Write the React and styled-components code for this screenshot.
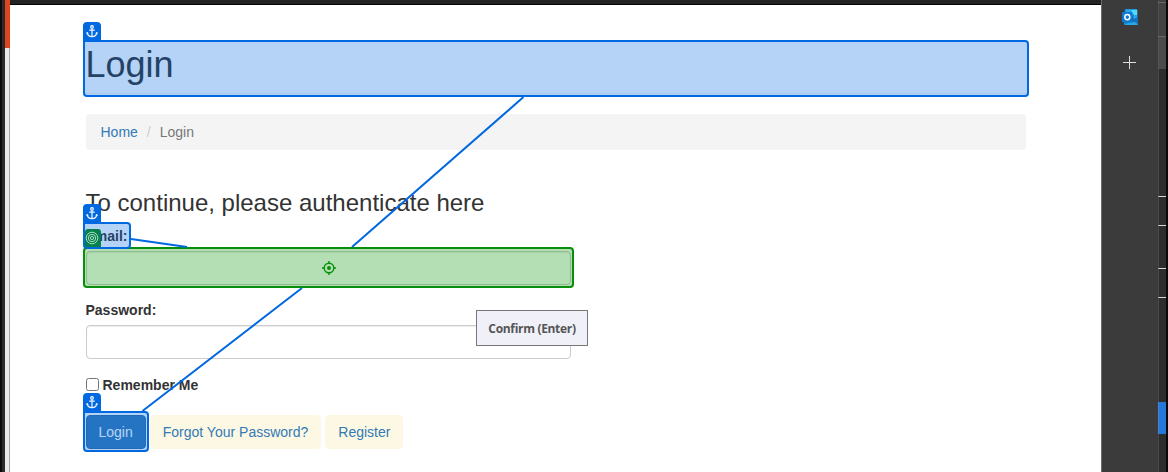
import React from "react";
import styled, { createGlobalStyle } from "styled-components";

const BLUE = "#0068e0";
const GREEN = "#078f0b";

const GlobalStyle = createGlobalStyle`
  * { box-sizing: border-box; }
  body {
    margin: 0;
    overflow: hidden;
    background: #fff;
    color: #333;
    font: 14px/20px "Liberation Sans", Arial, sans-serif;
  }
`;

const Screen = styled.div`
  position: relative;
  display: flex;
  width: 1168px;
  height: 472px;
  overflow: hidden;
`;

const WindowEdge = styled.div`
  flex: none;
  width: 5px;
  background: #2b2b2b;
  border-left: 2px solid #0b0b0b;
`;

const Gutter = styled.div`
  flex: none;
  width: 5px;
  background: #ebe9e8;
  border-right: 1px solid #a6a6a6;
`;

const GutterAccent = styled.div`
  width: 5px;
  height: 48px;
  background: #df4420;
`;

const Page = styled.main`
  flex: none;
  width: 1091px;
  border-top: 4px solid #232323;
  background: #fff;
`;

const TopShade = styled.div`
  height: 1px;
  background: #050505;
`;

const Content = styled.div`
  width: 940px;
  margin-left: 75.5px;
  padding-top: 39px;
`;

const PageHeader = styled.header`
  position: relative;
  height: 50px;
  margin-bottom: 20px;
  border-bottom: 1px solid #eee;
`;

const Title = styled.h1`
  margin: 0;
  font-size: 36px;
  font-weight: 400;
  line-height: 41px;
`;

const Breadcrumb = styled.nav`
  display: flex;
  height: 36px;
  padding: 8px 15px;
  border-radius: 4px;
  background: #f4f4f4;
  color: #777;
`;

const Separator = styled.span`
  padding: 0 9px;
  color: #ccc;
`;

const Link = styled.a`
  color: #337ab7;
  text-decoration: none;
`;

const Form = styled.form`
  width: 485px;
  margin-top: 40px;
`;

const Heading = styled.h3`
  margin: 0 0 10px;
  font-size: 24px;
  font-weight: 400;
  line-height: 26px;
`;

const Field = styled.div`
  margin-bottom: 15px;
`;

const Label = styled.label`
  position: relative;
  display: block;
  width: max-content;
  margin-bottom: 5px;
  font-weight: 700;
`;

const Control = styled.div`
  position: relative;
`;

const Input = styled.input`
  display: block;
  width: 100%;
  height: 34px;
  border: 1px solid #ccc;
  border-radius: 4px;
  background: #fff;
  box-shadow: inset 0 1px 1px rgba(0, 0, 0, 0.075);
`;

const CheckRow = styled.label`
  display: flex;
  align-items: center;
  gap: 4px;
  height: 20px;
  margin: 16px 0 20px;
  font-weight: 700;
`;

const Checkbox = styled.input`
  width: 13px;
  height: 13px;
  margin: 0 0 1px;
`;

const Actions = styled.div`
  display: flex;
  gap: 4px;
`;

const Button = styled.a`
  position: relative;
  height: 34px;
  padding: 6px 12px;
  border: 1px solid ${(p) => (p.$primary ? "#2e6da4" : "#fcf8e3")};
  border-radius: 4px;
  background: ${(p) => (p.$primary ? "#337ab7" : "#fcf8e3")};
  color: ${(p) => (p.$primary ? "#fff" : "#337ab7")};
  white-space: nowrap;
`;

const Highlight = styled.div`
  position: absolute;
  z-index: ${(p) => (p.$target ? 2 : 3)};
  inset: ${(p) => p.$inset};
  display: flex;
  align-items: center;
  justify-content: center;
  padding-left: ${(p) => (p.$target ? "1px" : "0")};
  border: 2px solid ${(p) => (p.$target ? GREEN : BLUE)};
  border-radius: ${(p) => (p.$target ? "4px" : "0 4px 4px 4px")};
  background: ${(p) => (p.$target ? "rgba(5, 145, 5, 0.3)" : "rgba(0, 104, 224, 0.29)")};
`;

const AnchorTab = styled.div`
  position: absolute;
  top: -20px;
  left: -2px;
  display: flex;
  justify-content: center;
  width: 18px;
  height: 19px;
  padding-top: 3px;
  border-radius: 4px 4px 0 0;
  background: ${BLUE};
`;

const TargetTab = styled.div`
  position: absolute;
  top: 5px;
  left: 0;
  display: flex;
  align-items: center;
  width: 16px;
  height: 18px;
  border-radius: 3px 3px 0 0;
  background: #06814b;
`;

const Connectors = styled.svg`
  position: absolute;
  z-index: 3;
  inset: 0;
  pointer-events: none;
`;

const Tooltip = styled.div`
  position: absolute;
  z-index: 4;
  top: 310px;
  left: 476px;
  width: 112px;
  height: 36px;
  border: 1px solid #777;
  background: #f0f1f8;
  color: #555;
  font: 700 12px/36px "Open Sans", "Noto Sans", sans-serif;
  letter-spacing: -0.32px;
  text-align: center;
  white-space: nowrap;
`;

const Sidebar = styled.aside`
  flex: none;
  display: flex;
  flex-direction: column;
  align-items: center;
  gap: 31px;
  width: 57px;
  padding-top: 9px;
  padding-right: 1px;
  border-left: 1px solid #6c6c6c;
  background: #3b3b3b;
`;

const Rail = styled.div`
  flex: none;
  width: 10px;
  border-right: 2px solid #090909;
  background: #2d2d2d;
`;

const Segment = styled.div`
  height: ${(p) => p.$h}px;
  border-left: 1px solid ${(p) => p.$edge || "#494949"};
  background: ${(p) => p.$bg || "#2d2d2d"};
`;

const AnchorIcon = () => (
  <svg width="12" height="13" viewBox="0 0 12 13" fill="none" stroke="#f0f6ff" strokeWidth="1.25">
    <circle cx="6" cy="1.9" r="1.3" />
    <path d="M6 3.2V11.7M3.2 5H8.8" />
    <path d="M1.2 7.6C1.4 10.2 3 11.4 6 11.7C9 11.4 10.6 10.2 10.8 7.600" />
    <path d="M0.6 8.9L1.1 7.2L2.5 8.3M11.4 8.9L10.9 7.2L9.5 8.3" strokeWidth="0.8" />
  </svg>
);

const RingsIcon = () => (
  <svg width="14" height="14" viewBox="0 0 14 14" fill="none" stroke="#a9dcc0" strokeWidth="1">
    <circle cx="7" cy="7" r="5.8" />
    <circle cx="7" cy="7" r="3.7" />
    <circle cx="7" cy="7" r="1.6" />
  </svg>
);

const CrosshairIcon = () => (
  <svg width="14" height="14" viewBox="0 0 14 14" fill="none" stroke={GREEN} strokeWidth="1.4">
    <circle cx="7" cy="7" r="4.8" />
    <circle cx="7" cy="7" r="2" fill={GREEN} stroke="none" />
    <path d="M7 0V2.5M7 11.5V14M0 7H2.5M11.5 7H14" />
  </svg>
);

const OutlookIcon = () => (
  <svg width="16" height="16" viewBox="0 0 16 16">
    <path d="M3.5 0H14.5Q15.2 0 15.2 0.8V9H2.8V0.8Q2.8 0 3.5 0Z" fill="#1489d8" />
    <path d="M3.500 0.5H9.5V5H3.500Z" fill="#28a8ea" />
    <path d="M9.5 0.8H15.2V6H9.5Z" fill="#50d9ff" />
    <path d="M10.5 6H15.2V8.5L11 11Z" fill="#28a8ea" />
    <path d="M2 8.5L9 12L16 7.8V15.2Q16 16 15.2 16H2.8Q2 16 2 15.2Z" fill="#1490df" />
    <path d="M16 7.8V15.2L10 11.4Z" fill="#1270b8" />
    <path d="M10 11.4L16 15.2Q15.8 16 15.2 16H3Z" fill="#28a8ea" />
    <path d="M10.5 4L11.5 5V13.5H3V13H10.5Z" fill="#0a4f87" opacity="0.6" />
    <rect y="3" width="10.6" height="10.2" rx="0.8" fill="#0f78d4" />
    <ellipse cx="5.3" cy="8.1" rx="2.5" ry="2.7" fill="none" stroke="#fff" strokeWidth="1.5" />
  </svg>
);

const PlusIcon = () => (
  <svg width="13" height="13" viewBox="0 0 13 13" stroke="#dedede" strokeWidth="1">
    <path d="M6.5 0V13M0 6.5H13" />
  </svg>
);

const AnchorHighlight = ({ inset, children }) => (
  <Highlight $inset={inset}>
    <AnchorTab>
      <AnchorIcon />
    </AnchorTab>
    {children}
  </Highlight>
);

const SEGMENTS = [
  { h: 2, bg: "#414141", edge: "#505050" },
  { h: 1, bg: "#686868", edge: "#686868" },
  { h: 33, bg: "#424242", edge: "#505050" },
  { h: 1, bg: "#686868", edge: "#686868" },
  { h: 32, bg: "#4b4b4b", edge: "#565656" },
  { h: 127 },
  { h: 1, bg: "#d8d8d8", edge: "#a0a0a0" },
  { h: 28 },
  { h: 1, bg: "#d8d8d8", edge: "#a0a0a0" },
  { h: 42 },
  { h: 1, bg: "#d8d8d8", edge: "#a0a0a0" },
  { h: 28 },
  { h: 1, bg: "#d8d8d8", edge: "#a0a0a0" },
  { h: 104 },
  { h: 32, bg: "#2577d8", edge: "#3c85d8" },
  { h: 38 },
];

export default function App() {
  return (
    <>
      <GlobalStyle />
      <Screen>
        <WindowEdge />
        <Gutter>
          <GutterAccent />
        </Gutter>
        <Page>
          <TopShade />
          <Content>
            <PageHeader>
              <Title>Login</Title>
              <AnchorHighlight inset="-4px -3px -4px -3px" />
            </PageHeader>
            <Breadcrumb>
              <Link>Home</Link>
              <Separator>/</Separator>
              <span>Login</span>
            </Breadcrumb>
            <Form>
              <Heading>To continue, please authenticate here</Heading>
              <Field>
                <Label>
                  Email:
                  <AnchorHighlight inset="-4px -3px -3px -3px">
                    <TargetTab>
                      <RingsIcon />
                    </TargetTab>
                  </AnchorHighlight>
                </Label>
                <Control>
                  <Input type="text" />
                  <Highlight $target $inset="-4px -3px -3px -3px">
                    <CrosshairIcon />
                  </Highlight>
                </Control>
              </Field>
              <Field>
                <Label>Password:</Label>
                <Input type="password" />
              </Field>
              <CheckRow>
                <Checkbox type="checkbox" />
                Remember Me
              </CheckRow>
              <Actions>
                <Button $primary>
                  Login
                  <AnchorHighlight inset="-5px -4px -4px -4px" />
                </Button>
                <Button>Forgot Your Password?</Button>
                <Button>Register</Button>
              </Actions>
            </Form>
          </Content>
        </Page>
        <Sidebar>
          <OutlookIcon />
          <PlusIcon />
        </Sidebar>
        <Rail>
          {SEGMENTS.map((s, i) => (
            <Segment key={i} $h={s.h} $bg={s.bg} $edge={s.edge} />
          ))}
        </Rail>
        <Connectors width="1168" height="472" stroke={BLUE} strokeWidth="2">
          <path d="M523.5 97L352 247M302 288L142.500 411M131 239L187 247" />
        </Connectors>
        <Tooltip>Confirm (Enter)</Tooltip>
      </Screen>
    </>
  );
}
